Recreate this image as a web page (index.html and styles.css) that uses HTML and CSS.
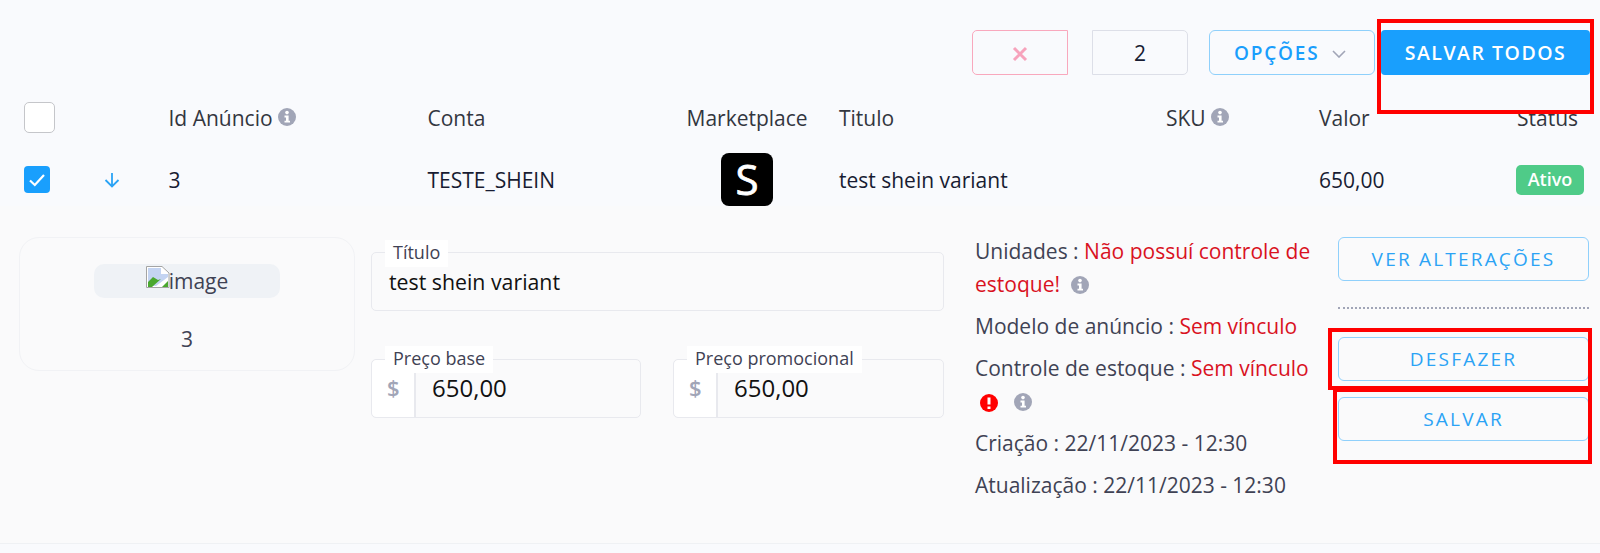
FILE: index.html
```html
<!DOCTYPE html>
<html lang="en">
<head>
    <meta charset="UTF-8">
    <meta name="viewport" content="width=device-width, initial-scale=1.0">
    <title>Anúncios</title>
    <link rel="stylesheet" href="styles.css">
</head>
<body>
    <div class="toolbar">
        <button class="btn-clear">
            <svg width="16" height="16" viewBox="0 0 16 16"><path d="M2 2 14 14M14 2 2 14" stroke="#f7a3bc" stroke-width="3" fill="none"/></svg>
        </button>
        <div class="count">2</div>
        <button class="btn-options">OPÇÕES
            <svg width="14" height="8" viewBox="0 0 14 8"><path d="M1 1 7 7 13 1" stroke="#a1a5b7" stroke-width="1.6" fill="none"/></svg>
        </button>
        <button class="btn-save-all">SALVAR TODOS</button>
    </div>

    <div class="grid-row head-row">
        <div class="check-cell"><span class="check-empty"></span></div>
        <div>Id Anúncio <svg class="info" viewBox="0 0 18 18"><use href="#icon-info"/></svg></div>
        <div>Conta</div>
        <div>Marketplace</div>
        <div>Titulo</div>
        <div>SKU <svg class="info" viewBox="0 0 18 18"><use href="#icon-info"/></svg></div>
        <div>Valor</div>
        <div>Status</div>
    </div>

    <div class="grid-row item-row">
        <div class="check-cell">
            <span class="check-on">
                <svg width="18" height="14" viewBox="0 0 18 14"><path d="M2 7.5 6.8 12 16 2" stroke="#fff" stroke-width="2.2" fill="none"/></svg>
            </span>
            <svg class="arrow" width="16" height="16" viewBox="0 0 16 16"><path d="M8 1V14M1.5 8 8 14.5 14.5 8" stroke="#2ba3f5" stroke-width="1.8" fill="none"/></svg>
        </div>
        <div>3</div>
        <div>TESTE_SHEIN</div>
        <div class="logo-cell">
            <div class="logo">S</div>
        </div>
        <div>test shein variant</div>
        <div></div>
        <div>650,00</div>
        <div><span class="badge">Ativo</span></div>
    </div>

    <div class="details">
        <div class="image-card">
            <div class="image-chip">
                <svg width="24" height="24" viewBox="0 0 24 24">
                    <path d="M.5 1.5H16L23 8V22.5H.5Z" fill="#fff" stroke="#a4a4a4"/>
                    <path d="M2 3H15V9H22V12L10 21H2Z" fill="#c4d4f2"/>
                    <path d="M2 22V17L7 12 12 15 15 14 6 22Z" fill="#4aa82f"/>
                    <path d="M16 22 22 16V22Z" fill="#4aa82f"/>
                </svg><span>image</span>
            </div>
            <div class="image-id">3</div>
        </div>

        <div class="form">
            <div class="field">
                <label class="field-label">Título</label>
                <div class="field-value">test shein variant</div>
            </div>
            <div class="price-row">
                <div class="field price">
                    <label class="field-label">Preço base</label>
                    <span class="prefix">$</span>
                    <div class="price-value">650,00</div>
                </div>
                <div class="field price">
                    <label class="field-label">Preço promocional</label>
                    <span class="prefix">$</span>
                    <div class="price-value">650,00</div>
                </div>
            </div>
        </div>

        <div class="info-list">
            <p>Unidades : <span class="red">Não possuí controle de estoque!</span> <svg class="info gap" viewBox="0 0 18 18"><use href="#icon-info"/></svg></p>
            <p>Modelo de anúncio : <span class="red">Sem vínculo</span></p>
            <p>Controle de estoque : <span class="red">Sem vínculo</span>
                <svg class="alert" viewBox="0 0 18 18"><circle cx="9" cy="9" r="9" fill="#f00"/><path d="M9 3.5V10.5M9 12.5V15" stroke="#fff" stroke-width="3" fill="none"/></svg>
                <svg class="info gap" viewBox="0 0 18 18"><use href="#icon-info"/></svg></p>
            <p>Criação : 22/11/2023 - 12:30</p>
            <p>Atualização : 22/11/2023 - 12:30</p>
        </div>

        <div class="actions">
            <button class="btn-line">VER ALTERAÇÕES</button>
            <div class="dots"></div>
            <button class="btn-line">DESFAZER</button>
            <button class="btn-line spaced">SALVAR</button>
        </div>
    </div>

    <!-- marcações vermelhas por cima da tela -->
    <div class="mark mark-all"></div>
    <div class="mark mark-undo"></div>
    <div class="mark mark-save"></div>

    <svg width="0" height="0" class="defs">
        <symbol id="icon-info" viewBox="0 0 18 18">
            <circle cx="9" cy="9" r="9" fill="#a1a5b7"/>
            <circle cx="9" cy="4.6" r="1.8" fill="#fff"/>
            <path d="M6.5 7.6H10.6V12.8H12V14.6H6.5V12.8H8V9.4H6.5Z" fill="#fff"/>
        </symbol>
    </svg>
</body>
</html>
```

FILE: styles.css
```css
* { box-sizing: border-box; }
body {
    margin: 0;
    height: 553px;
    overflow: hidden;
    position: relative;
    background-color: #f9fafd;
    font-family: "Open Sans", sans-serif;
    font-size: 21px;
    color: #3f4254;
}
button { font-family: inherit; cursor: pointer; }
p { margin: 0; }

.toolbar {
    display: flex;
    justify-content: flex-end;
    padding: 30px 10px 0 0;
    height: 102px;
}
.toolbar > * { height: 45px; border-radius: 4px; }
.btn-clear {
    width: 96px;
    margin-right: 24px;
    padding: 6px 0 0;
    background: transparent;
    border: 1px solid #f9a8bd;
    border-radius: 5px 0 0 5px;
}
.count {
    width: 96px;
    margin-right: 21px;
    border: 1px solid #dddfe8;
    border-radius: 0 5px 5px 0;
    display: flex;
    align-items: center;
    justify-content: center;
    color: #181c32;
}
.btn-options {
    width: 166px;
    margin-right: 6px;
    padding-right: 10px;
    background: transparent;
    border: 1px solid #8fd0fb;
    border-radius: 6px;
    color: #1a9efc;
    font-size: 19px;
    font-weight: 600;
    letter-spacing: 1.8px;
}
.btn-options svg { margin-left: 6px; vertical-align: 2px; }
.btn-save-all {
    width: 209px;
    border: 0;
    background-color: #199ffd;
    color: #fff;
    font-size: 19.5px;
    font-weight: 600;
    letter-spacing: 1.5px;
}

.grid-row {
    display: grid;
    grid-template-columns: 144.5px 259px 259px 152.5px 327px 153px 198px 1fr;
    padding-left: 24px;
    align-items: center;
    white-space: nowrap;
}
.head-row { height: 31px; color: #33363f; }
.head-row .info { vertical-align: 0; }
.item-row { height: 53px; margin-top: 20px; color: #181c32; }
.check-cell { display: flex; align-items: center; }
.check-empty {
    width: 31px;
    height: 31px;
    background: #fff;
    border: 1px solid #c5c6ca;
    border-radius: 5px;
}
.check-on {
    width: 26px;
    height: 27px;
    background-color: #199ffd;
    border-radius: 4px;
    display: flex;
    align-items: center;
    justify-content: center;
}
.arrow { margin-left: 54px; }
.info { width: 18px; height: 18px; vertical-align: -2px; }
.info.gap { margin-left: 6px; }
.alert { width: 18px; height: 18px; vertical-align: -3px; margin: 0 5px 0 5px; }

.logo-cell { padding-left: 34.5px; }
.logo {
    width: 52px;
    height: 53px;
    background: #000;
    border-radius: 8px;
    color: #fff;
    font-size: 42px;
    -webkit-text-stroke: 0.8px #fff;
    line-height: 52px;
    text-align: center;
}
.badge {
    display: block;
    width: 68px;
    height: 30px;
    margin-left: -1px;
    background-color: #4fcb88;
    border-radius: 5px;
    color: #fff;
    font-size: 18px;
    font-weight: 600;
    line-height: 29px;
    text-align: center;
}

.details {
    display: flex;
    align-items: flex-start;
    height: 338px;
    padding: 31px 0 0 19px;
    background-color: #fafafb;
    border-bottom: 1px solid #eff1f4;
}
.image-card {
    width: 336px;
    height: 134px;
    padding-top: 26px;
    border: 1px solid #f1f2f5;
    border-radius: 20px;
    text-align: center;
}
.image-chip {
    display: flex;
    align-items: center;
    justify-content: center;
    width: 186px;
    height: 34px;
    margin: 0 auto;
    background-color: #eff2f6;
    border-radius: 10px;
}
.image-chip svg { margin: -8px -1px 0 0; }
.image-id { margin-top: 27px; }

.form { width: 573px; margin: 15px 0 0 16px; }
.field {
    position: relative;
    height: 59px;
    border: 1px solid #e8e9ee;
    border-radius: 5px;
}
.field-label {
    position: absolute;
    left: 13px;
    top: -13px;
    padding: 0 8px;
    height: 27px;
    background: #fff;
    font-size: 18px;
    line-height: 24px;
}
.price .field-label { top: -14px; }
.field-value {
    padding: 14px 0 0 17px;
    font-size: 21.3px;
    color: #111;
}
.price-row {
    display: flex;
    justify-content: space-between;
    margin-top: 48px;
}
.price {
    width: 270px;
    display: flex;
    align-items: stretch;
}
.price + .price { width: 271px; }
.prefix {
    width: 44px;
    flex: none;
    background: #fff;
    border-right: 2px solid #e8e9ee;
    border-radius: 5px 0 0 5px;
    padding: 13px 0 0 15px;
    color: #a1a5b7;
    font-size: 22px;
    font-weight: 600;
    line-height: 28px;
}
.price-value {
    padding: 12px 0 0 16px;
    font-size: 24px;
    line-height: 32px;
    color: #111;
}

.info-list {
    width: 340px;
    margin: -2px 0 0 31px;
    line-height: 33px;
}
.info-list p { margin-bottom: 9px; }
.red { color: #d9121f; }

.actions { width: 251px; margin-left: 23px; }
.btn-line {
    display: block;
    width: 100%;
    height: 44px;
    background: transparent;
    border: 1px solid #8fd0fb;
    border-radius: 6px;
    color: #2ba3f5;
    font-size: 19px;
    font-weight: 500;
    letter-spacing: 2.2px;
}
.btn-line.spaced { margin-top: 16px; }
.dots {
    height: 2px;
    margin: 26px 0 28px;
    border-top: 2px dotted #a1a5b7;
}

.mark {
    position: absolute;
    border: 4px solid #f00;
}
.mark-all { left: 1377px; top: 19px; width: 217px; height: 95px; }
.mark-undo { left: 1328px; top: 328px; width: 264px; height: 62px; }
.mark-save { left: 1333px; top: 388px; width: 259px; height: 76px; }
.defs { position: absolute; }
```
